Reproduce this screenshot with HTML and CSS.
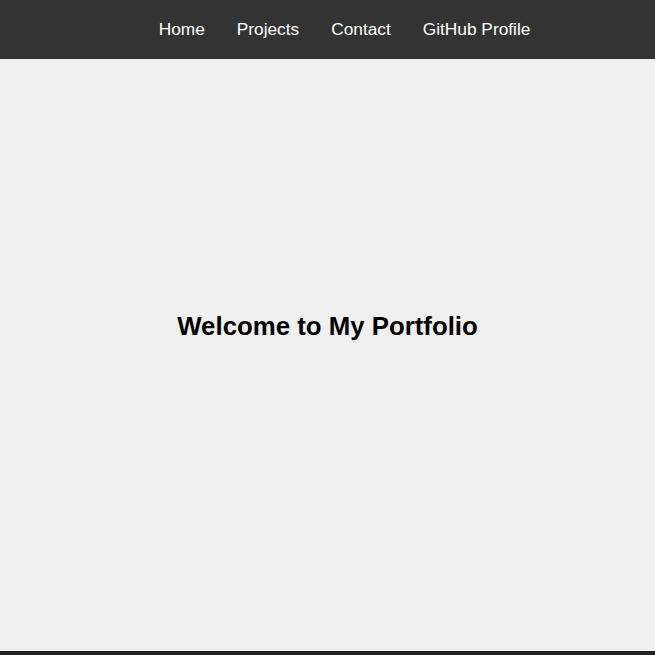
FILE: index.html
```html
<!DOCTYPE html>
<html lang="en">
<head>
<meta charset="utf-8">
<title>My Portfolio</title>
<link rel="stylesheet" href="styles.css">
</head>
<body>
<nav class="nav">
  <ul class="nav-list">
    <li><a class="nav-link" href="#">Home</a></li>
    <li><a class="nav-link" href="#">Projects</a></li>
    <li><a class="nav-link" href="#">Contact</a></li>
    <li><a class="nav-link" href="#">GitHub Profile</a></li>
  </ul>
</nav>
<main class="hero">
  <h1 class="hero-title">Welcome to My Portfolio</h1>
</main>
<footer class="footer"></footer>
</body>
</html>
```
FILE: styles.css
```css
* { box-sizing: border-box; }
html, body { margin: 0; padding: 0; }
body {
  font-family: "Liberation Sans", Arial, sans-serif;
  background: #f0f0f0;
  color: #000;
  height: 655px;
  overflow: hidden;
  display: flex;
  flex-direction: column;
}
.nav {
  background: #333333;
  height: 59px;
  display: flex;
  align-items: center;
}
.nav-list {
  list-style: none;
  margin: 0;
  padding: 0 0 0 34px;
  width: 100%;
  display: flex;
  justify-content: center;
  gap: 32px;
}
.nav-link {
  color: #ffffff;
  text-decoration: none;
  font-size: 17.3px;
}
.hero {
  height: 592px;
  display: flex;
  align-items: center;
  justify-content: center;
  padding-bottom: 58px;
}
.hero-title {
  margin: 0;
  font-size: 25.8px;
  font-weight: bold;
}
.footer {
  flex: 1;
  background: #222222;
}
```
